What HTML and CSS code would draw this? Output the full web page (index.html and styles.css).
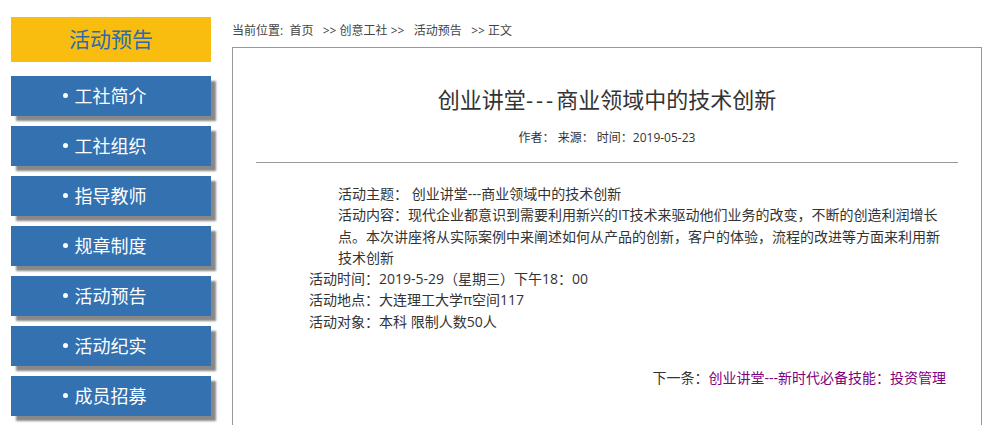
FILE: index.html
```html
<!DOCTYPE html>
<html lang="zh-CN">
<head>
    <meta charset="UTF-8">
    <title>活动预告 - 正文</title>
    <link rel="stylesheet" href="styles.css">
</head>
<body>
<div class="page">
    <aside class="sidebar">
        <div class="side-title">活动预告</div>
        <ul class="side-nav">
            <li><a href="#">工社简介</a></li>
            <li><a href="#">工社组织</a></li>
            <li><a href="#">指导教师</a></li>
            <li><a href="#">规章制度</a></li>
            <li><a href="#">活动预告</a></li>
            <li><a href="#">活动纪实</a></li>
            <li><a href="#">成员招募</a></li>
        </ul>
    </aside>

    <main class="main">
        <div class="crumbs">当前位置:&nbsp; <a href="#">首页</a>&nbsp;&nbsp; &gt;&gt; <a href="#">创意工社</a> &gt;&gt;&nbsp;&nbsp; <a href="#">活动预告</a>&nbsp;&nbsp; &gt;&gt; 正文</div>

        <div class="article">
            <h1 class="article-title">创业讲堂<span class="dash">---</span>商业领域中的技术创新</h1>
            <div class="article-meta">作者： 来源： 时间：2019-05-23</div>
            <hr class="article-line">

            <div class="article-body">
                <div class="topic">
                    <p>活动主题： 创业讲堂---商业领域中的技术创新</p>
                    <p>活动内容：现代企业都意识到需要利用新兴的IT技术来驱动他们业务的改变，不断的创造利润增长点。本次讲座将从实际案例中来阐述如何从产品的创新，客户的体验，流程的改进等方面来利用新技术创新</p>
                </div>
                <p>活动时间：2019-5-29（星期三）下午18：00</p>
                <p>活动地点：大连理工大学π空间117</p>
                <p>活动对象：本科 限制人数50人</p>

                <div class="next">下一条：<a href="#">创业讲堂---新时代必备技能：投资管理</a></div>
            </div>
        </div>
    </main>
</div>
</body>
</html>
```

FILE: styles.css
```css
body {
    margin: 0;
    font-family: "Open Sans", "Noto Sans CJK SC", sans-serif;
    color: #333;
    background: #fff;
}
a {
    color: inherit;
    text-decoration: none;
}
.page {
    display: flex;
    padding-left: 11px;
}

/* left column */
.sidebar {
    width: 200px;
    margin-top: 17px;
    flex-shrink: 0;
}
.side-title {
    box-sizing: border-box;
    height: 45px;
    padding-bottom: 3px;
    display: flex;
    align-items: center;
    justify-content: center;
    background: #f9bd10;
    color: #2b6aae;
    font-size: 21px;
    font-family: "Noto Sans CJK SC", sans-serif;
}
.side-nav {
    list-style: none;
    margin: 14px 0 0;
    padding: 0;
    display: flex;
    flex-direction: column;
    gap: 10px;
}
.side-nav a {
    box-sizing: border-box;
    display: flex;
    align-items: center;
    justify-content: center;
    gap: 7px;
    height: 40px;
    padding: 0 13px 3px 0;
    background: #3371b1;
    color: #fff;
    font-size: 18px;
    font-family: "Noto Sans CJK SC", sans-serif;
    box-shadow: 5px 5px 2px #888;
}
.side-nav a::before {
    content: "";
    width: 5px;
    height: 5px;
    margin-top: 2px;
    border-radius: 50%;
    background: #fff;
}

/* right column */
.main {
    width: 750px;
    margin-left: 21px;
    padding-top: 23px;
}
.crumbs {
    font-size: 12px;
    line-height: 16px;
    color: #444;
}
.article {
    margin-top: 8px;
    border: 1px solid #999;
    border-bottom: none;
    padding: 0 23px 40px;
}
.article-title {
    margin: 36px 0 0;
    font-size: 22px;
    line-height: 30px;
    font-weight: normal;
    text-align: center;
    color: #333;
}
.article-title .dash {
    letter-spacing: 3px;
}
.article-meta {
    margin-top: 14px;
    font-size: 12px;
    line-height: 20px;
    text-align: center;
}
.article-line {
    margin: 14px 0 0;
    border: none;
    border-top: 1px solid #999;
}
.article-body {
    margin-top: 20px;
    padding: 0 12px 0 53px;
    font-size: 14px;
    line-height: 21.3px;
}
.article-body p {
    margin: 0;
}
.topic {
    margin-left: 29px;
}
.next {
    margin-top: 35px;
    text-align: right;
}
.next a {
    color: #800080;
}
```
